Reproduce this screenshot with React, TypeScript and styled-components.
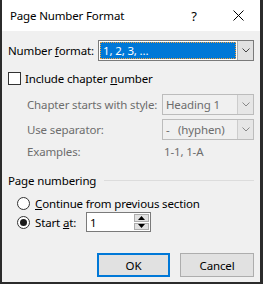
import styled, { createGlobalStyle } from "styled-components";

const GlobalStyle = createGlobalStyle`
    html, body {
        margin: 0;
        padding: 0;
        background: #2b2b2b;
    }
    body {
        font-family: "Noto Sans", "Open Sans", sans-serif;
        font-size: 11.5px;
        letter-spacing: -0.15px;
        color: #000;
    }
`;

const Frame = styled.div`
    width: 263px;
    height: 284px;
    box-sizing: border-box;
    border-left: 2px solid #2b2b2b;
    border-right: 3px solid #2b2b2b;
    border-bottom: 2px solid #2b2b2b;
    background: #f0f0f0;
    display: flex;
    flex-direction: column;
`;

const TitleBar = styled.div`
    height: 31px;
    background: #fff;
    display: flex;
    align-items: center;
    padding-left: 8px;
    flex-shrink: 0;
`;

const Title = styled.div`
    flex: 1;
`;

const TitleButton = styled.div`
    width: 44px;
    height: 31px;
    display: flex;
    align-items: center;
    justify-content: center;
    font-size: 13px;
`;

const Body = styled.div`
    display: flex;
    flex-direction: column;
    padding: 9px 6px 0 6px;
`;

const Row = styled.div<{ $h: number; $top: number; $indent?: number }>`
    height: ${(p) => p.$h}px;
    margin-top: ${(p) => p.$top}px;
    padding-left: ${(p) => p.$indent ?? 0}px;
    display: flex;
    align-items: center;
`;

const Label = styled.div<{ $w?: number; $disabled?: boolean }>`
    width: ${(p) => (p.$w ? `${p.$w}px` : "auto")};
    flex-shrink: 0;
    color: ${(p) => (p.$disabled ? "#6d6d6d" : "#000")};
    white-space: nowrap;
`;

const Combo = styled.div<{ $disabled?: boolean }>`
    flex: 1;
    height: 100%;
    box-sizing: border-box;
    border: 1px solid ${(p) => (p.$disabled ? "#bcbcbc" : "#7a7a7a")};
    background: ${(p) => (p.$disabled ? "#f0f0f0" : "#fff")};
    display: flex;
    color: ${(p) => (p.$disabled ? "#6d6d6d" : "#000")};
`;

const ComboValue = styled.div<{ $selected?: boolean }>`
    flex: 1;
    display: flex;
    align-items: center;
    padding-left: 3px;
    margin: ${(p) => (p.$selected ? "1px" : "0")};
    background: ${(p) => (p.$selected ? "#0078d7" : "transparent")};
    color: ${(p) => (p.$selected ? "#fff" : "inherit")};
    outline: ${(p) => (p.$selected ? "1px dotted #f7a33c" : "none")};
    outline-offset: -1px;
    white-space: pre;
`;

const ComboArrow = styled.div<{ $disabled?: boolean }>`
    width: 16px;
    box-sizing: border-box;
    border-left: 1px solid ${(p) => (p.$disabled ? "#cccccc" : "#adadad")};
    background: ${(p) => (p.$disabled ? "#e6e6e6" : "#e1e1e1")};
    display: flex;
    align-items: center;
    justify-content: center;
`;

const Box = styled.div`
    width: 13px;
    height: 13px;
    box-sizing: border-box;
    border: 1px solid #333;
    background: #fff;
    margin-right: 4px;
`;

const Radio = styled.div<{ $checked?: boolean }>`
    width: 13px;
    height: 13px;
    box-sizing: border-box;
    border-radius: 50%;
    border: 1px solid #333;
    background: #fff;
    margin-right: 5px;
    display: flex;
    align-items: center;
    justify-content: center;
    &::after {
        content: "";
        display: ${(p) => (p.$checked ? "block" : "none")};
        width: 7px;
        height: 7px;
        border-radius: 50%;
        background: #1a1a1a;
    }
`;

const GroupLine = styled.div`
    flex: 1;
    height: 1px;
    background: #dcdcdc;
    margin-left: 8px;
`;

const Spin = styled.div`
    width: 65px;
    height: 100%;
    box-sizing: border-box;
    border: 1px solid #7a7a7a;
    background: #fff;
    display: flex;
`;

const SpinValue = styled.div`
    flex: 1;
    display: flex;
    align-items: center;
    padding-left: 3px;
`;

const SpinButtons = styled.div`
    width: 17px;
    display: flex;
    flex-direction: column;
    gap: 1px;
    padding: 1px;
    box-sizing: border-box;
`;

const SpinButton = styled.div`
    flex: 1;
    background: #e1e1e1;
    border: 1px solid #adadad;
    display: flex;
    align-items: center;
    justify-content: center;
`;

const Buttons = styled.div`
    display: flex;
    justify-content: flex-end;
    gap: 10px;
    margin-top: 21px;
`;

const Button = styled.div<{ $default?: boolean }>`
    width: ${(p) => (p.$default ? 73 : 74)}px;
    height: 24px;
    box-sizing: border-box;
    background: #e1e1e1;
    border: ${(p) => (p.$default ? "2px solid #0078d7" : "1px solid #adadad")};
    display: flex;
    align-items: center;
    justify-content: center;
`;

function Chevron({ color = "#444" }: { color?: string }) {
    return (
        <svg width="8" height="5" viewBox="0 0 8 5">
            <path d="M0.5 0.5 L4 4 L7.5 0.5" fill="none" stroke={color} strokeWidth="1" />
        </svg>
    );
}

function Tri({ up }: { up?: boolean }) {
    return (
        <svg width="7" height="4" viewBox="0 0 7 4">
            <path d={up ? "M0 4 L3.5 0 L7 4 Z" : "M0 0 L3.5 4 L7 0 Z"} fill="#000" />
        </svg>
    );
}

export default function App() {
    return (
        <>
            <GlobalStyle />
            <Frame>
                <TitleBar>
                    <Title>Page Number Format</Title>
                    <TitleButton>?</TitleButton>
                    <TitleButton>
                        <svg width="11" height="11" viewBox="0 0 11 11">
                            <path d="M0.5 0.5 L10.5 10.5 M10.5 0.5 L0.5 10.5" stroke="#000" strokeWidth="1" />
                        </svg>
                    </TitleButton>
                </TitleBar>
                <Body>
                    <Row $h={21} $top={0}>
                        <Label $w={90}>Number <u>f</u>ormat:</Label>
                        <Combo>
                            <ComboValue $selected>1, 2, 3, ...</ComboValue>
                            <ComboArrow><Chevron /></ComboArrow>
                        </Combo>
                    </Row>
                    <Row $h={14} $top={10}>
                        <Box />
                        <Label>Include chapter <u>n</u>umber</Label>
                    </Row>
                    <Row $h={21} $top={9} $indent={19}>
                        <Label $w={135} $disabled>Chapter starts with style:</Label>
                        <Combo $disabled>
                            <ComboValue>Heading 1</ComboValue>
                            <ComboArrow $disabled><Chevron color="#888" /></ComboArrow>
                        </Combo>
                    </Row>
                    <Row $h={21} $top={4} $indent={19}>
                        <Label $w={135} $disabled>Use separator:</Label>
                        <Combo $disabled>
                            <ComboValue>{"-   (hyphen)"}</ComboValue>
                            <ComboArrow $disabled><Chevron color="#888" /></ComboArrow>
                        </Combo>
                    </Row>
                    <Row $h={14} $top={4} $indent={19}>
                        <Label $w={137} $disabled>Examples:</Label>
                        <Label $disabled>1-1, 1-A</Label>
                    </Row>
                    <Row $h={14} $top={15}>
                        <Label>Page numbering</Label>
                        <GroupLine />
                    </Row>
                    <Row $h={14} $top={9} $indent={9}>
                        <Radio />
                        <Label><u>C</u>ontinue from previous section</Label>
                    </Row>
                    <Row $h={20} $top={2} $indent={9}>
                        <Radio $checked />
                        <Label $w={51}>Start <u>a</u>t:</Label>
                        <Spin>
                            <SpinValue>1</SpinValue>
                            <SpinButtons>
                                <SpinButton><Tri up /></SpinButton>
                                <SpinButton><Tri /></SpinButton>
                            </SpinButtons>
                        </Spin>
                    </Row>
                    <Buttons>
                        <Button $default>OK</Button>
                        <Button>Cancel</Button>
                    </Buttons>
                </Body>
            </Frame>
        </>
    );
}
